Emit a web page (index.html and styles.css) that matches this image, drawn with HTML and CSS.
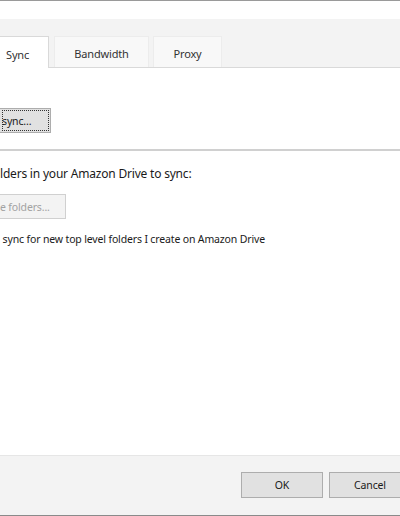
FILE: index.html
```html
<!DOCTYPE html>
<html>
<head>
<meta charset="utf-8">
<link rel="stylesheet" href="styles.css">
</head>
<body>
<div class="window">
  <div class="titlegap"></div>
  <div class="tabstrip">
    <div class="tab tab-active">Sync</div>
    <div class="tab tab-bw">Bandwidth</div>
    <div class="tab tab-proxy">Proxy</div>
  </div>
  <div class="panel">
    <div class="row-top">
      <button class="btn btn-focus">sync...</button>
    </div>
    <div class="separator"></div>
    <div class="heading">lders in your Amazon Drive to sync:</div>
    <button class="btn btn-disabled">e folders...</button>
    <div class="checkline">&nbsp;sync for new top level folders I create on Amazon Drive</div>
  </div>
  <div class="footer">
    <button class="btn btn-footer btn-ok">OK</button>
    <button class="btn btn-footer btn-cancel">Cancel</button>
  </div>
</div>
</body>
</html>
```
FILE: styles.css
```css
html, body {
  margin: 0;
  padding: 0;
  background: #ffffff;
}
body {
  width: 400px;
  height: 516px;
  overflow: hidden;
  font-family: "Noto Sans", "Open Sans", sans-serif;
  font-size: 10.5px;
  letter-spacing: -0.15px;
  color: #1a1a1a;
}
.window {
  height: 516px;
  box-sizing: border-box;
  border-top: 1px solid #9a9a9a;
  border-bottom: 1px solid #8a8a8a;
  display: flex;
  flex-direction: column;
}
.titlegap {
  height: 18px;
  background: #ffffff;
}
.tabstrip {
  height: 49px;
  box-sizing: border-box;
  background: #f3f3f3;
  border-bottom: 1px solid #d9d9d9;
  display: flex;
  align-items: flex-end;
}
.tab {
  height: 31px;
  box-sizing: border-box;
  display: flex;
  align-items: center;
  justify-content: center;
  font-size: 11px;
  color: #333333;
  padding-top: 3px;
}
.tab-active {
  width: 49px;
  height: 32px;
  background: #ffffff;
  border: 1px solid #d9d9d9;
  border-left: none;
  border-bottom: none;
  justify-content: flex-start;
  padding-left: 6px;
  padding-top: 4px;
  margin-bottom: -1px;
}
.tab-bw {
  width: 95px;
  margin-left: 5px;
  background: #f8f8f8;
  border: 1px solid #ececec;
  border-bottom: none;
}
.tab-proxy {
  width: 69px;
  margin-left: 4px;
  background: #f8f8f8;
  border: 1px solid #ececec;
  border-bottom: none;
}
.panel {
  flex: 1;
  background: #ffffff;
  display: flex;
  flex-direction: column;
  align-items: flex-start;
}
.row-top {
  margin-top: 40px;
}
.btn {
  font-family: "Noto Sans", "Open Sans", sans-serif;
  font-size: 10.5px;
  letter-spacing: -0.15px;
  margin: 0;
  padding: 0;
  box-sizing: border-box;
  color: #1a1a1a;
  background: #e1e1e1;
  border: 1px solid #adadad;
  display: flex;
  align-items: center;
}
.btn-focus {
  width: 51px;
  height: 25px;
  border-left: none;
  outline: 1px dotted #333333;
  outline-offset: -3px;
  padding-left: 2px;
}
.separator {
  align-self: stretch;
  height: 2px;
  background: #d0d0d0;
  margin-top: 16px;
}
.heading {
  font-size: 12px;
  letter-spacing: -0.2px;
  color: #1a1a1a;
  margin-top: 14px;
  line-height: 18px;
}
.btn-disabled {
  width: 66px;
  height: 25px;
  margin-top: 11px;
  background: #f3f3f3;
  border: 1px solid #d0d0d0;
  border-left: none;
  color: #a2a2a2;
}
.checkline {
  margin-top: 12px;
  line-height: 16px;
}
.footer {
  height: 60px;
  box-sizing: border-box;
  background: #f3f3f3;
  border-top: 1px solid #e6e6e6;
  display: flex;
  align-items: flex-start;
  padding-top: 16px;
  padding-left: 241px;
  gap: 6px;
}
.btn-footer {
  width: 82px;
  height: 26px;
  justify-content: center;
  flex-shrink: 0;
}
```
